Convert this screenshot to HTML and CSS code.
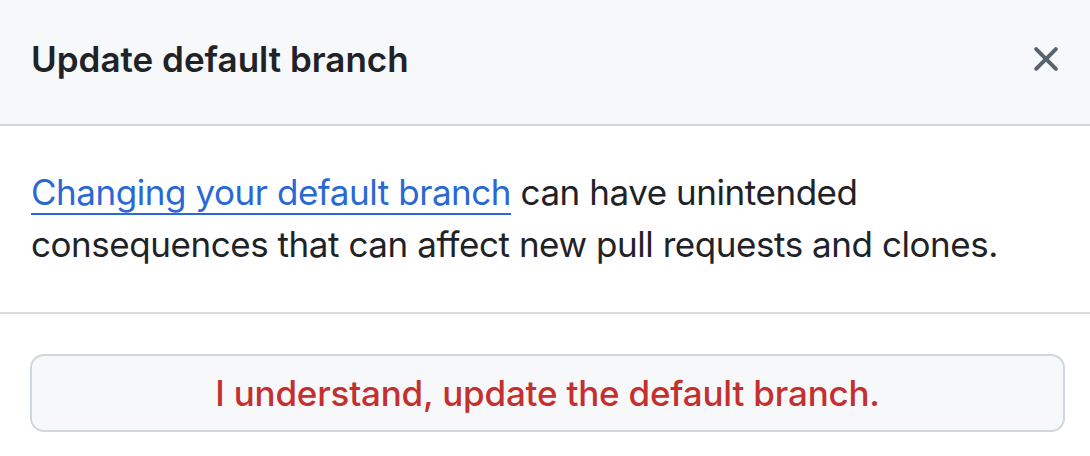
FILE: index.html
```html
<!DOCTYPE html>
<html lang="en">
<head>
<meta charset="utf-8">
<title>Update default branch</title>
<link rel="stylesheet" href="styles.css">
</head>
<body>
<div class="dialog">
  <div class="header">
    <h1 class="title">Update default branch</h1>
    <button class="close" aria-label="Close">
      <svg viewBox="0 0 16 16" width="42" height="42" aria-hidden="true"><path d="M3.72 3.72a.75.75 0 0 1 1.06 0L8 6.94l3.220-3.22a.749.749 0 0 1 1.275.326.749.749 0 0 1-.215.734L9.06 8l3.22 3.22a.749.749 0 0 1-.326 1.275.749.749 0 0 1-.734-.215L8 9.06l-3.22 3.22a.751.751 0 0 1-1.042-.018.751.751 0 0 1-.018-1.042L6.94 8 3.72 4.78a.75.75 0 0 1 0-1.06Z"/></svg>
    </button>
  </div>
  <div class="body">
    <p class="text"><a class="link" href="#">Changing your default branch</a> can have unintended consequences that can affect new pull requests and clones.</p>
  </div>
  <div class="footer">
    <button class="danger">I understand, update the default branch.</button>
  </div>
</div>
</body>
</html>
```
FILE: styles.css
```css
* { box-sizing: border-box; }
html, body { margin: 0; padding: 0; background: #ffffff; }
body {
  font-family: Inter, "Liberation Sans", sans-serif;
  color: #1f2328;
  width: 1090px;
  height: 456px;
  overflow: hidden;
}
.dialog { display: flex; flex-direction: column; }
.header {
  height: 126px;
  background: #f6f8fa;
  border-bottom: 2px solid #d0d7de;
  display: flex;
  align-items: center;
  justify-content: space-between;
  padding: 0 23px 6px 31px;
}
.title {
  margin: 0;
  font-size: 35px;
  font-weight: 600;
  line-height: 52px;
  color: #1f2328;
}
.close {
  border: 0;
  background: transparent;
  padding: 0;
  width: 42px;
  height: 42px;
  display: flex;
  align-items: center;
  justify-content: center;
  color: #59636e;
  fill: currentColor;
}
.body {
  padding: 40px 31px 42px;
  border-bottom: 2px solid #d8dee4;
}
.text {
  margin: 0;
  font-size: 35px;
  letter-spacing: -0.45px;
  line-height: 52px;
}
.link {
  color: #2a68d6;
  text-decoration: underline;
  text-decoration-thickness: 2px;
  text-underline-offset: 8px;
}
.footer {
  padding: 40px 25px 25px 30px;
}
.danger {
  width: 100%;
  height: 78px;
  border: 2px solid #d0d7de;
  border-radius: 14px;
  background: #f6f8fa;
  color: #c4302f;
  font-family: Inter, "Liberation Sans", sans-serif;
  font-size: 35px;
  letter-spacing: -0.2px;
  font-weight: 500;
  display: flex;
  align-items: center;
  justify-content: center;
  padding: 0;
}
```
